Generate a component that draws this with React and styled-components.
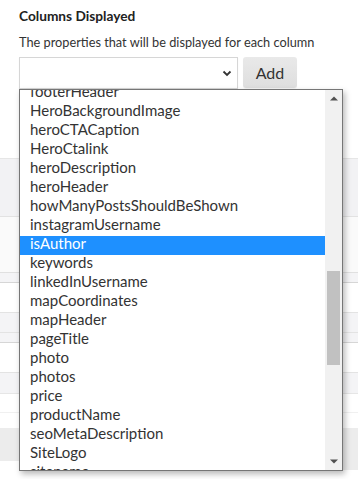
import React from "react";
import styled, { createGlobalStyle } from "styled-components";

const Global = createGlobalStyle`
  html, body { margin: 0; padding: 0; background: #fff; }
  body { font-family: Lato, "Open Sans", Arial, sans-serif; color: #333; overflow: hidden; }
  * { box-sizing: border-box; }
`;

const Page = styled.div`
  width: 358px;
  height: 479px;
  overflow: hidden;
  position: relative;
`;

const Section = styled.div`
  padding: 8px 0 0 19px;
`;

const Title = styled.div`
  font-size: 13.7px;
  font-weight: 700;
  line-height: 16px;
  color: #222;
`;

const Description = styled.div`
  margin-top: 10px;
  font-size: 12.75px;
  line-height: 16px;
  color: #333;
`;

const Controls = styled.div`
  margin-top: 7px;
  display: flex;
  align-items: flex-start;
  gap: 5px;
`;

const SelectWrap = styled.div`
  position: relative;
  width: 219px;
`;

const SelectBox = styled.div`
  height: 32px;
  border: 1px solid #d6d6d6;
  background: #fff;
  display: flex;
  align-items: center;
  justify-content: flex-end;
  padding-right: 5px;
  box-shadow: 0 1px 1px rgba(0,0,0,0.06);
`;

const AddButton = styled.button`
  width: 54px;
  height: 31px;
  border: none;
  border-radius: 3px;
  background: linear-gradient(#e9e9e9, #dedede);
  font-family: Lato, Arial, sans-serif;
  font-size: 16px;
  color: #333;
  padding: 0;
  box-shadow: 0 1px 1px rgba(0,0,0,0.05);
`;

const Dropdown = styled.div`
  position: absolute;
  top: 32px;
  left: 0;
  width: 324px;
  height: 382px;
  border: 1px solid #767676;
  background: #fff;
  box-shadow: 2px 3px 6px rgba(0,0,0,0.28);
  display: flex;
  z-index: 5;
`;

const Viewport = styled.div`
  flex: 1;
  overflow: hidden;
`;

const Options = styled.ul`
  list-style: none;
  margin: ${(p) => -p.$offset}px 0 0;
  padding: 0;
`;

const Option = styled.li`
  height: 19px;
  line-height: 14.5px;
  padding-left: 10px;
  font-size: 15px;
  white-space: nowrap;
  color: ${(p) => (p.$selected ? "#fff" : "#333")};
  background: ${(p) => (p.$selected ? "#1e90ff" : "transparent")};
`;

const ScrollTrack = styled.div`
  width: 17px;
  background: #f1f1f1;
  position: relative;
  display: flex;
  flex-direction: column;
  justify-content: space-between;
  align-items: center;
`;

const ArrowBtn = styled.div`
  height: 17px;
  width: 17px;
  display: flex;
  align-items: center;
  justify-content: center;
`;

const Thumb = styled.div`
  position: absolute;
  left: 2px;
  width: 13px;
  top: 181px;
  height: 94px;
  background: #c1c1c1;
`;

const Backdrop = styled.div`
  display: flex;
  flex-direction: column;
`;

const Row = styled.div`
  height: ${(p) => p.$h}px;
  background: ${(p) => p.$bg};
  border-bottom: ${(p) => (p.$line ? `1px solid ${p.$line}` : "none")};
`;

const Footer = styled.div`
  display: flex;
  height: 42px;
  background: #ececec;
  align-items: flex-end;
`;

const FooterBar = styled.div`
  display: flex;
  height: 9px;
  width: 343px;
  background: #fff;
`;

const Cell = styled.div`
  width: ${(p) => p.$w}px;
  flex: ${(p) => (p.$grow ? 1 : "none")};
  background: ${(p) => p.$bg || "#fff"};
  border-right: ${(p) => (p.$border ? "1px solid #e2e2e2" : "none")};
  display: flex;
  justify-content: center;
`;

const Chevron = () => (
  <svg width="10" height="7" viewBox="0 0 10 7">
    <path d="M1.5 1.5 L5 5 L8.5 1.5" fill="none" stroke="#333" strokeWidth="1.8" />
  </svg>
);

const Tri = ({ up }) => (
  <svg width="8" height="5" viewBox="0 0 8 5">
    <path d={up ? "M0 4.5 L4 0.5 L8 4.5 Z" : "M0 0.5 L8 0.5 L4 4.5 Z"} fill="#505050" />
  </svg>
);

const ListIcon = () => (
  <svg width="14" height="9" viewBox="0 0 14 9">
    <rect x="0" y="0" width="14" height="2" fill="#333" />
  </svg>
);

const items = [
  "footerHeader",
  "HeroBackgroundImage",
  "heroCTACaption",
  "HeroCtalink",
  "heroDescription",
  "heroHeader",
  "howManyPostsShouldBeShown",
  "instagramUsername",
  "isAuthor",
  "keywords",
  "linkedInUsername",
  "mapCoordinates",
  "mapHeader",
  "pageTitle",
  "photo",
  "photos",
  "price",
  "productName",
  "seoMetaDescription",
  "SiteLogo",
  "sitename",
];

const rows = [
  { h: 70, bg: "#fff", line: "#e6e6e6" },
  { h: 58, bg: "#f2f2f4", line: "#e2e2e2" },
  { h: 56, bg: "#fafafa", line: "#e0e0e0" },
  { h: 10, bg: "#f4f4f6", line: "#d6d6d6" },
  { h: 30, bg: "#fff", line: "#e3e3e3" },
  { h: 20, bg: "#f4f4f6", line: "#e3e3e3" },
  { h: 10, bg: "#f4f4f6", line: "#d6d6d6" },
  { h: 30, bg: "#fff", line: "#e3e3e3" },
  { h: 21, bg: "#f4f4f6", line: "#e6e6e6" },
  { h: 19, bg: "#fff", line: "#f0f0f0" },
  { h: 15, bg: "#fff" },
];

export default function App() {
  return (
    <Page>
      <Global />
      <Section>
        <Title>Columns Displayed</Title>
        <Description>The properties that will be displayed for each column</Description>
        <Controls>
          <SelectWrap>
            <SelectBox>
              <Chevron />
            </SelectBox>
            <Dropdown>
              <Viewport>
                <Options $offset={6}>
                  {items.map((it) => (
                    <Option key={it} $selected={it === "isAuthor"}>
                      {it}
                    </Option>
                  ))}
                </Options>
              </Viewport>
              <ScrollTrack>
                <ArrowBtn>
                  <Tri up />
                </ArrowBtn>
                <Thumb />
                <ArrowBtn>
                  <Tri />
                </ArrowBtn>
              </ScrollTrack>
            </Dropdown>
          </SelectWrap>
          <AddButton>Add</AddButton>
        </Controls>
      </Section>
      <Backdrop>
        {rows.map((r, i) => (
          <Row key={i} $h={r.h} $bg={r.bg} $line={r.line} />
        ))}
        <Footer>
          <FooterBar>
            <Cell $w={78} />
            <Cell $w={45} $bg="#f2f2f2" $border />
            <Cell $w={34} $border>
              <ListIcon />
            </Cell>
            <Cell $grow />
          </FooterBar>
        </Footer>
      </Backdrop>
    </Page>
  );
}
